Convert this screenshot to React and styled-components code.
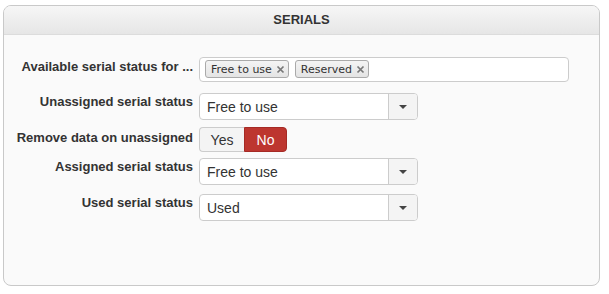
import React from "react";
import styled, { createGlobalStyle } from "styled-components";

const GlobalStyle = createGlobalStyle`
  body {
    margin: 0;
    background: #fff;
    font-family: "Liberation Sans", Arial, sans-serif;
    color: #333;
  }
`;

const App = () => {
  return (
    <>
      <GlobalStyle />
      <Page>
        <Panel>
          <Header>SERIALS</Header>
          <Body>
            <Row>
              <Label>Available serial status for ...</Label>
              <MultiInput>
                <Tag>
                  Free to use
                  <TagX />
                </Tag>
                <Tag>
                  Reserved
                  <TagX />
                </Tag>
              </MultiInput>
            </Row>
            <Row $mt={11}>
              <Label $pad={1}>Unassigned serial status</Label>
              <Select value="Free to use" />
            </Row>
            <Row $mt={7}>
              <Label $pad={3}>Remove data on unassigned</Label>
              <Toggle>
                <ToggleBtn $w={45}>Yes</ToggleBtn>
                <ToggleBtn $w={43} $active>
                  No
                </ToggleBtn>
              </Toggle>
            </Row>
            <Row $mt={6}>
              <Label $pad={1}>Assigned serial status</Label>
              <Select value="Free to use" />
            </Row>
            <Row $mt={9}>
              <Label $pad={1}>Used serial status</Label>
              <Select value="Used" />
            </Row>
          </Body>
        </Panel>
      </Page>
    </>
  );
};

const TagX = () => (
  <XIcon viewBox="0 0 9 9" width="9" height="9">
    <path d="M1.5 1.5 L7.5 7.5 M7.5 1.5 L1.5 7.5" stroke="#777" strokeWidth="1.7" />
  </XIcon>
);

const Select = ({ value }) => (
  <SelectBox>
    <SelectText>{value}</SelectText>
    <Caret>
      <svg viewBox="0 0 8 4" width="8" height="4">
        <path d="M0 0 L8 0 L4 4 Z" fill="#444" />
      </svg>
    </Caret>
  </SelectBox>
);

const Page = styled.div`
  padding: 5px 9px 8px 3px;
`;

const Panel = styled.div`
  height: 281px;
  box-sizing: border-box;
  border: 1px solid #c9c9c9;
  border-radius: 8px;
  background: #fafafa;
  overflow: hidden;
`;

const Header = styled.div`
  height: 27px;
  display: flex;
  align-items: center;
  justify-content: center;
  border-bottom: 1px solid #dcdcdc;
  background: linear-gradient(#f6f6f6, #e6e6e6);
  font-size: 13px;
  font-weight: bold;
  color: #333;
  padding-bottom: 1px;
`;

const Body = styled.div`
  display: flex;
  flex-direction: column;
  padding: 22px 0 0 9px;
`;

const Row = styled.div`
  display: flex;
  align-items: flex-start;
  gap: 6px;
  margin-top: ${(p) => p.$mt ?? 0}px;
`;

const Label = styled.div`
  width: 180px;
  flex: none;
  text-align: right;
  font-size: 13px;
  font-weight: bold;
  line-height: 16px;
  padding-top: ${(p) => p.$pad ?? 2}px;
  white-space: nowrap;
  color: #333;
`;

const MultiInput = styled.div`
  width: 370px;
  height: 25px;
  box-sizing: border-box;
  border: 1px solid #ccc;
  border-radius: 4px;
  background: #fff;
  display: flex;
  align-items: flex-start;
  gap: 6px;
  padding: 2px 5px;
`;

const Tag = styled.div`
  height: 18px;
  box-sizing: border-box;
  display: flex;
  align-items: center;
  gap: 4px;
  padding: 0 3px 0 5px;
  border: 1px solid #aaa;
  border-radius: 3px;
  background: linear-gradient(#f4f4f4, #e4e4e4);
  font-family: "DejaVu Sans", sans-serif;
  font-size: 11px;
  color: #333;
`;

const XIcon = styled.svg`
  display: block;
  margin-top: 1px;
`;

const SelectBox = styled.div`
  width: 219px;
  height: 27px;
  box-sizing: border-box;
  border: 1px solid #ccc;
  border-radius: 4px;
  background: #fff;
  display: flex;
  overflow: hidden;
`;

const SelectText = styled.div`
  flex: 1;
  display: flex;
  align-items: center;
  padding-left: 7px;
  font-size: 14px;
  color: #333;
`;

const Caret = styled.div`
  width: 28px;
  display: flex;
  align-items: center;
  justify-content: center;
  border-left: 1px solid #ccc;
  background: #f4f4f4;
`;

const Toggle = styled.div`
  display: flex;
  height: 25px;
`;

const ToggleBtn = styled.div`
  width: ${(p) => p.$w}px;
  box-sizing: border-box;
  display: flex;
  align-items: center;
  justify-content: center;
  font-size: 14px;
  border: 1px solid ${(p) => (p.$active ? "#a52a25" : "#ccc")};
  background: ${(p) => (p.$active ? "#bd362f" : "#f4f4f4")};
  color: ${(p) => (p.$active ? "#fff" : "#333")};
  border-radius: ${(p) => (p.$active ? "0 4px 4px 0" : "4px 0 0 4px")};
  ${(p) => !p.$active && "border-right: none;"}
`;

export default App;
